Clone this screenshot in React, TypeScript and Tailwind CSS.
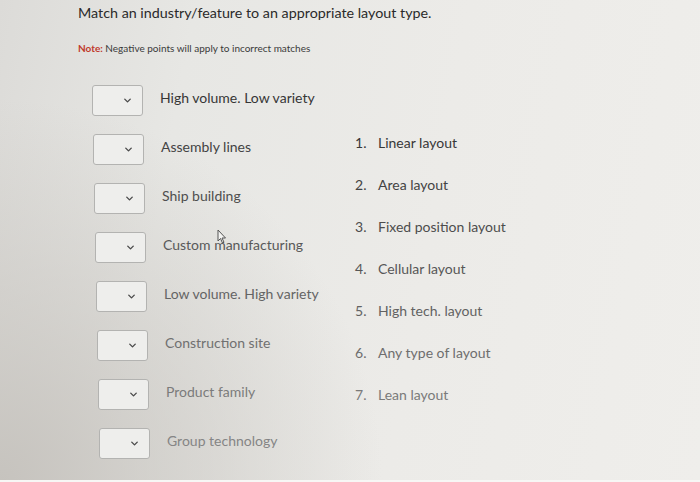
import { ChevronDown } from 'lucide-react'

const LABELS = [
  { text: 'High volume. Low variety', color: 'text-[#363636]', shift: 'ml-[0px]' },
  { text: 'Assembly lines', color: 'text-[#434343]', shift: 'ml-[1px]' },
  { text: 'Ship building', color: 'text-[#4e4e4e]', shift: 'ml-[2px]' },
  { text: 'Custom manufacturing', color: 'text-[#595959]', shift: 'ml-[3px]' },
  { text: 'Low volume. High variety', color: 'text-[#646464]', shift: 'ml-[4px]' },
  { text: 'Construction site', color: 'text-[#707070]', shift: 'ml-[5px]' },
  { text: 'Product family', color: 'text-[#7b7b7b]', shift: 'ml-[6px]' },
  { text: 'Group technology', color: 'text-[#858585]', shift: 'ml-[7px]' },
]

const OPTIONS = [
  { text: 'Linear layout', color: 'text-[#383838]' },
  { text: 'Area layout', color: 'text-[#434343]' },
  { text: 'Fixed position layout', color: 'text-[#4d4d4d]' },
  { text: 'Cellular layout', color: 'text-[#575757]' },
  { text: 'High tech. layout', color: 'text-[#626262]' },
  { text: 'Any type of layout', color: 'text-[#6e6e6e]' },
  { text: 'Lean layout', color: 'text-[#7a7a7a]' },
]

export default function App() {
  return (
    <div className="relative h-[482px] w-[700px] overflow-hidden bg-[radial-gradient(circle_at_0%_100%,#c6c3be,transparent_45%),linear-gradient(100deg,#dcdbd8_0%,#e7e7e4_25%,#ecebe8_60%,#efeeeb_100%)] pl-[78px] pt-[3px] font-['Lato','Liberation_Sans',sans-serif]">
      <h1 className="text-[14.3px] leading-[20px] text-[#2a2a2a]">
        Match an industry/feature to an appropriate layout type.
      </h1>
      <p className="mt-[19px] text-[10px] leading-[12px] text-[#3a3a3a]">
        <span className="font-bold text-[#c0392b]">Note:</span> Negative points will apply to incorrect matches
      </p>

      <div className="mt-[31px] flex">
        <div className="ml-[14px] flex w-[263px] flex-col gap-[18px]">
          {LABELS.map((l) => (
            <div key={l.text} className={`flex items-center ${l.shift}`}>
              <div className="flex h-[31px] w-[51px] items-center justify-end rounded-[3px] border border-[#b3b3b1] bg-[#eeeeec] pr-[9px]">
                <ChevronDown size={11} strokeWidth={3} className="text-[#4a4a4a]" />
              </div>
              <span className={`ml-[17px] -mt-[6px] text-[14px] leading-[20px] ${l.color}`}>{l.text}</span>
            </div>
          ))}
        </div>

        <ol className="mt-[48px] flex flex-col gap-[22px]">
          {OPTIONS.map((o, i) => (
            <li key={o.text} className={`flex text-[14px] leading-[20px] ${o.color}`}>
              <span className="w-[23px]">{i + 1}.</span>
              <span>{o.text}</span>
            </li>
          ))}
        </ol>
      </div>

      <svg className="absolute left-[217px] top-[229px]" width="10" height="15" viewBox="0 0 10 15">
        <path d="M1 1 L1 12 L3.5 9.5 L5.5 14 L7 13.3 L5 9 L8.5 9 Z" fill="#f4f4f2" stroke="#555" strokeWidth="1" strokeLinejoin="round" />
      </svg>
      <div className="absolute bottom-0 left-0 h-[2px] w-full bg-[#f7f7f5]" />
    </div>
  )
}
